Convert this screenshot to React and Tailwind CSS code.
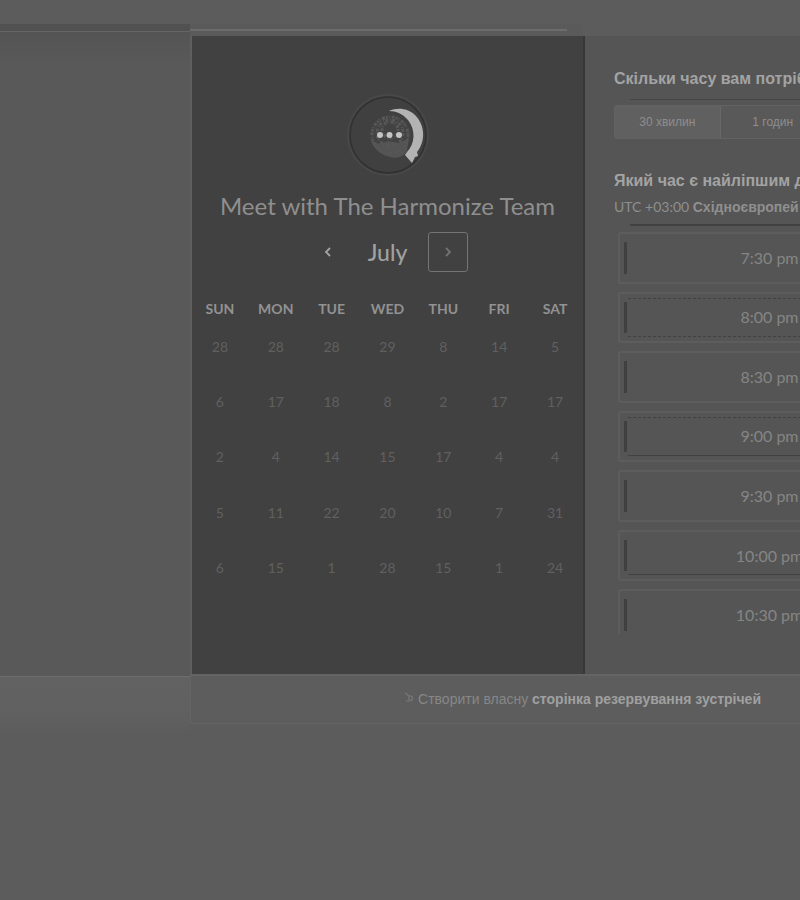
import React from "react";

const days = ["SUN", "MON", "TUE", "WED", "THU", "FRI", "SAT"];
const weeks = [
  [28, 28, 28, 29, 8, 14, 5],
  [6, 17, 18, 8, 2, 17, 17],
  [2, 4, 14, 15, 17, 4, 4],
  [5, 11, 22, 20, 10, 7, 31],
  [6, 15, 1, 28, 15, 1, 24],
];

const slots = [
  { time: "7:30 pm" },
  { time: "8:00 pm", top: "border-dashed", bottom: "border-dashed" },
  { time: "8:30 pm" },
  { time: "9:00 pm", top: "border-dashed", bottom: "border-solid" },
  { time: "9:30 pm" },
  { time: "10:00 pm", bottom: "border-solid" },
  { time: "10:30 pm" },
];

function Logo() {
  return (
    <svg width="88" height="88" viewBox="0 0 88 88" role="img" aria-label="Harmonize">
      <circle cx="44" cy="43" r="40" fill="none" stroke="#484848" strokeWidth="2" />
      <circle cx="44" cy="43" r="38" fill="#404040" stroke="#313131" strokeWidth="1.5" />
      <circle cx="46" cy="43" r="20" fill="#424242" />
      <path d="M27 49C30 58 38 63 46 65C54 67 60 64 63 59L65 46L55 51L44 49L36 52Z" fill="#545454" />
      <g fill="none" stroke="#575757">
        <circle cx="46" cy="43" r="18" strokeWidth="3" strokeDasharray="2 1 1 2 3 1" />
        <circle cx="46" cy="41" r="13" strokeWidth="3" strokeDasharray="3 2 1 1" />
        <circle cx="46" cy="38" r="8" strokeWidth="3" strokeDasharray="1 2 3 1" />
      </g>
      <path
        d="M45 19C53 15 64 16 71 23C81 33 82 49 73 60L74 64L71 65L68 71L61 63L63 60C71 52 72 38 64 28C59 22 52 19 45 19Z"
        fill="#b3b3b3"
      />
      <g fill="#c3c3c3">
        <circle cx="36" cy="43" r="3" />
        <circle cx="45.500" cy="43" r="3" />
        <circle cx="55" cy="43" r="3" />
      </g>
    </svg>
  );
}

function Chevron({ d }) {
  return (
    <svg width="12" height="14" viewBox="0 0 12 14" fill="none" stroke="currentColor" strokeWidth="1.8" aria-hidden="true">
      <path d={d} />
    </svg>
  );
}

function Calendar() {
  return (
    <section className="flex w-[395px] shrink-0 flex-col items-center border-x-2 border-l-[#5f5f5f] border-r-[#383838] bg-[#414141] pt-14 font-[Lato,sans-serif]">
      <Logo />
      <h1 className="mt-[10px] text-2xl leading-8 whitespace-nowrap text-[#8f8f8f]">Meet with The Harmonize Team</h1>
      <div className="mt-[10px] flex items-center">
        <button aria-label="Previous month" className="flex size-10 items-center justify-center text-[#a3a3a3]">
          <Chevron d="M8 3L4 7L8 11" />
        </button>
        <h2 className="w-20 text-center text-[23px] leading-8 font-medium text-[#a0a0a0]">July</h2>
        <button aria-label="Next month" className="flex size-10 items-center justify-center rounded-[3px] border border-[#747474] text-[#737373]">
          <Chevron d="M4 3L8 7L4 11" />
        </button>
      </div>
      <table className="mt-6 h-[302px] w-full table-fixed border-collapse">
        <thead>
          <tr className="h-[26px]">
            {days.map((d) => (
              <th key={d} scope="col" className="p-0 text-sm leading-5 font-bold text-[#929292]">{d}</th>
            ))}
          </tr>
        </thead>
        <tbody>
          {weeks.map((week, i) => (
            <tr key={i}>
              {week.map((n, j) => (
                <td key={j} className="p-0 pt-3 text-center align-top">
                  <button className="text-sm leading-5 text-[#606060]">{n}</button>
                </td>
              ))}
            </tr>
          ))}
        </tbody>
      </table>
    </section>
  );
}

function Slot({ time, top, bottom }) {
  return (
    <button className="relative rounded-[3px] border-2 border-[#5d5d5d] text-base leading-5 text-[#858585]">
      <span className="absolute inset-y-2 left-1 w-[3px] bg-[#404040]" />
      {top && <span className={`absolute inset-x-2 top-1 border-t border-[#414141] ${top}`} />}
      {bottom && <span className={`absolute inset-x-2 bottom-1 border-t border-[#414141] ${bottom}`} />}
      {time}
    </button>
  );
}

function Times() {
  return (
    <section className="min-w-0 flex-1 overflow-hidden bg-[#555555] pt-[31px] pl-[29px] whitespace-nowrap">
      <h3 className="text-base leading-6 font-bold text-[#a3a3a3]">Скільки часу вам потріб</h3>
      <div className="mt-2 ml-4 w-[196px] border-t border-[#444444]" />
      <div className="mt-[5px] flex h-[34px] w-[212px] rounded-[3px] border border-[#626262] text-xs text-[#8e8e8e]">
        <button className="flex-1 bg-[#606060]">30 хвилин</button>
        <button className="flex-1 border-l border-[#676767] bg-[#595959]">1 годин</button>
      </div>
      <h3 className="mt-[30px] text-base leading-6 font-bold text-[#a3a3a3]">Який час є найліпшим д</h3>
      <p className="mt-[2px] text-sm leading-6 text-[#8f8f8f]">
        <span className="font-[Lato,sans-serif]">UTC +03:00 </span>
        <b>Східноєвропей</b>
      </p>
      <div className="mt-[5px] ml-4 border-t-2 border-[#414141]" />
      <div className="mt-[6px] h-[402px] overflow-hidden">
        <div className="ml-1 grid h-[409px] w-[303px] auto-rows-fr gap-2 font-[Lato,sans-serif]">
          {slots.map((s) => (
            <Slot key={s.time} {...s} />
          ))}
        </div>
      </div>
    </section>
  );
}

export default function App() {
  return (
    <main className="flex min-h-screen overflow-hidden bg-[#5c5c5c] pt-6 font-['Liberation_Sans',Arial,sans-serif]">
      <div className="w-[190px] shrink-0">
        <div className="h-2 border-b border-[#656565] bg-[#515151]" />
        <div className="h-[645px] border-b border-[#6d6d6d] bg-linear-to-b from-[#545454] via-[#595959] via-5% to-[#595959]" />
        <div className="h-14 bg-linear-to-b from-[#626262] via-[#606060] via-70% to-[#5c5c5c]" />
      </div>
      <div className="min-w-0 flex-1">
        <div className="mr-[217px] h-3 bg-[#5a5a5a] pt-[5px]">
          <div className="mr-4 h-[2px] bg-[#6c6c6c]" />
        </div>
        <div className="flex h-[638px]">
          <Calendar />
          <Times />
        </div>
        <footer className="h-[50px] border-t-2 border-b border-l border-[#646464] bg-[#5d5d5d] pr-[39px] text-right text-sm leading-[46px] whitespace-nowrap text-[#878787]">
          <a href="#create" className="inline-flex items-center gap-[2px]">
            <svg width="12" height="16" viewBox="0 0 12 16" fill="none" stroke="#787878" strokeWidth="1.2" aria-hidden="true">
              <path d="M1 2L5 5V10H2M5 5C9 4 10 9 6 10" />
            </svg>
            <span>Створити власну <b className="text-[#a0a0a0]">сторінка резервування зустрічей</b></span>
          </a>
        </footer>
      </div>
    </main>
  );
}
